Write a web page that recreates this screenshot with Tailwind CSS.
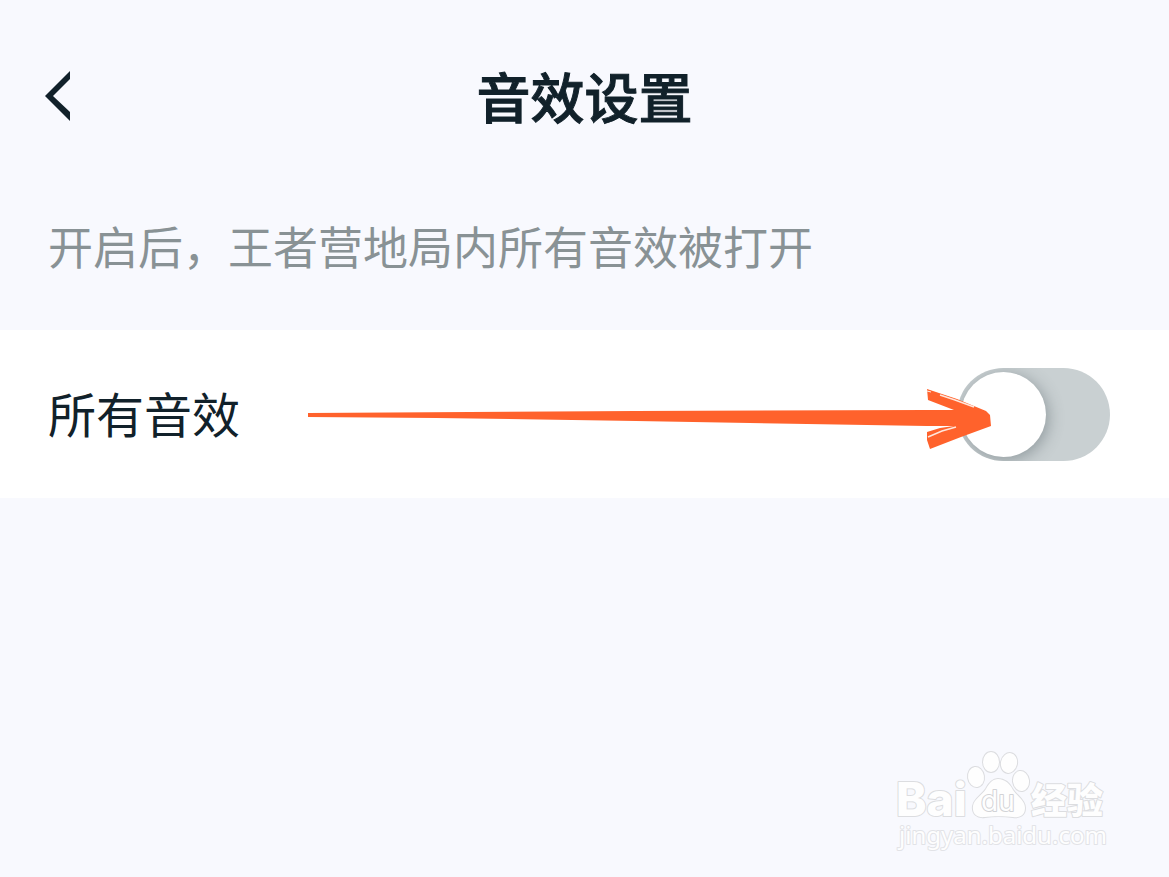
<!DOCTYPE html>
<html lang="zh-CN">
<head>
  <meta charset="UTF-8">
  <meta name="viewport" content="width=device-width, initial-scale=1.0">
  <title>音效设置</title>
  <script src="https://cdn.jsdelivr.net/npm/@tailwindcss/browser@4"></script>
</head>
<body class="relative min-h-screen bg-[#f8f9fe] font-['Noto_Sans_CJK_SC',sans-serif] text-[#11212a]">
  <!-- Header -->
  <header class="grid grid-cols-[1fr_auto_1fr] items-center px-11 pt-14">
    <a href="#" aria-label="返回" class="block w-7">
      <svg class="h-[52px] w-7" viewBox="0 0 28 52" fill="#11212a">
        <path d="M26 1V9L9 26L26 42V51L1 26Z"/>
      </svg>
    </a>
    <h1 class="text-[54px] leading-20 font-medium [-webkit-text-stroke:1px_#11212a]">音效设置</h1>
  </header>

  <main>
    <p class="px-12 pt-[78px] pb-[52px] text-[45px] leading-16 text-[#899295]">开启后，王者营地局内所有音效被打开</p>

    <!-- Setting row -->
    <div class="relative flex h-[168px] items-center justify-between bg-white pr-[59px] pl-12">
      <label for="allSounds" class="pb-1 text-5xl">所有音效</label>
      <input
        type="checkbox"
        role="switch"
        id="allSounds"
        class="h-[93px] w-[153px] appearance-none overflow-hidden rounded-full bg-[#c9d0d2] p-1 before:block before:size-[85px] before:rounded-full before:bg-white before:shadow-[2px_3px_16px_rgba(70,85,90,0.45)] checked:bg-emerald-400 checked:before:translate-x-[60px]"
      >
      <!-- Pointer arrow -->
      <svg class="pointer-events-none absolute top-[55px] right-[177px] h-[68px] w-[686px]" viewBox="0 0 686 68" aria-hidden="true">
        <path d="M2 28L330 26L621 25H648L622 15L621 4L651 14L680 26L684 30L685 41L655 52L624 64L621 55V47L634 43L648 41H621L330 36L130 33L2 32Z" fill="#ff622c"/>
        <path d="M634 10L649 15L668 22M622 52L636 46L650 42" fill="none" stroke="#ffe6dc" stroke-width="1.500"/>
        <path d="M621 6L625 7" stroke="#fff0e8" stroke-width="1"/>
      </svg>
    </div>
  </main>

  <!-- Watermark -->
  <footer class="absolute right-[58px] bottom-6 h-[104px] w-[220px]">
    <svg class="size-full overflow-visible" viewBox="0 0 220 104" role="img" aria-label="Baidu 经验">
      <g fill="#fefefe" stroke="#dcdde0" stroke-width="2" paint-order="stroke" stroke-linejoin="round">
        <ellipse cx="85" cy="28" rx="8" ry="10" transform="rotate(-8 85 28)"/>
        <ellipse cx="100" cy="13" rx="8" ry="10"/>
        <ellipse cx="118" cy="14" rx="8" ry="10" transform="rotate(12 118 14)"/>
        <ellipse cx="130" cy="32" rx="8" ry="10" transform="rotate(-8 130 32)"/>
        <path d="M107 30C114 30 119 35 122 41C126 47 134 51 134 59C134 66 129 69 122 68C114 67 101 67 94 68C86 69 81 65 82 57C83 50 91 46 95 40C98 34 102 30 107 30Z"/>
        <text x="5" y="67" font-family="Inter" font-size="46" font-weight="800">Bai</text>
        <text x="90" y="62" font-family="Inter" font-size="28" font-weight="400" stroke="#d2d3d6">du</text>
        <text x="140" y="65" font-family="Noto Sans CJK SC" font-size="36" font-weight="900">经验</text>
        <text x="8" y="95" font-family="Noto Sans" font-size="24" stroke="#e2e3e7">jingyan.baidu.com</text>
      </g>
    </svg>
  </footer>
</body>
</html>
